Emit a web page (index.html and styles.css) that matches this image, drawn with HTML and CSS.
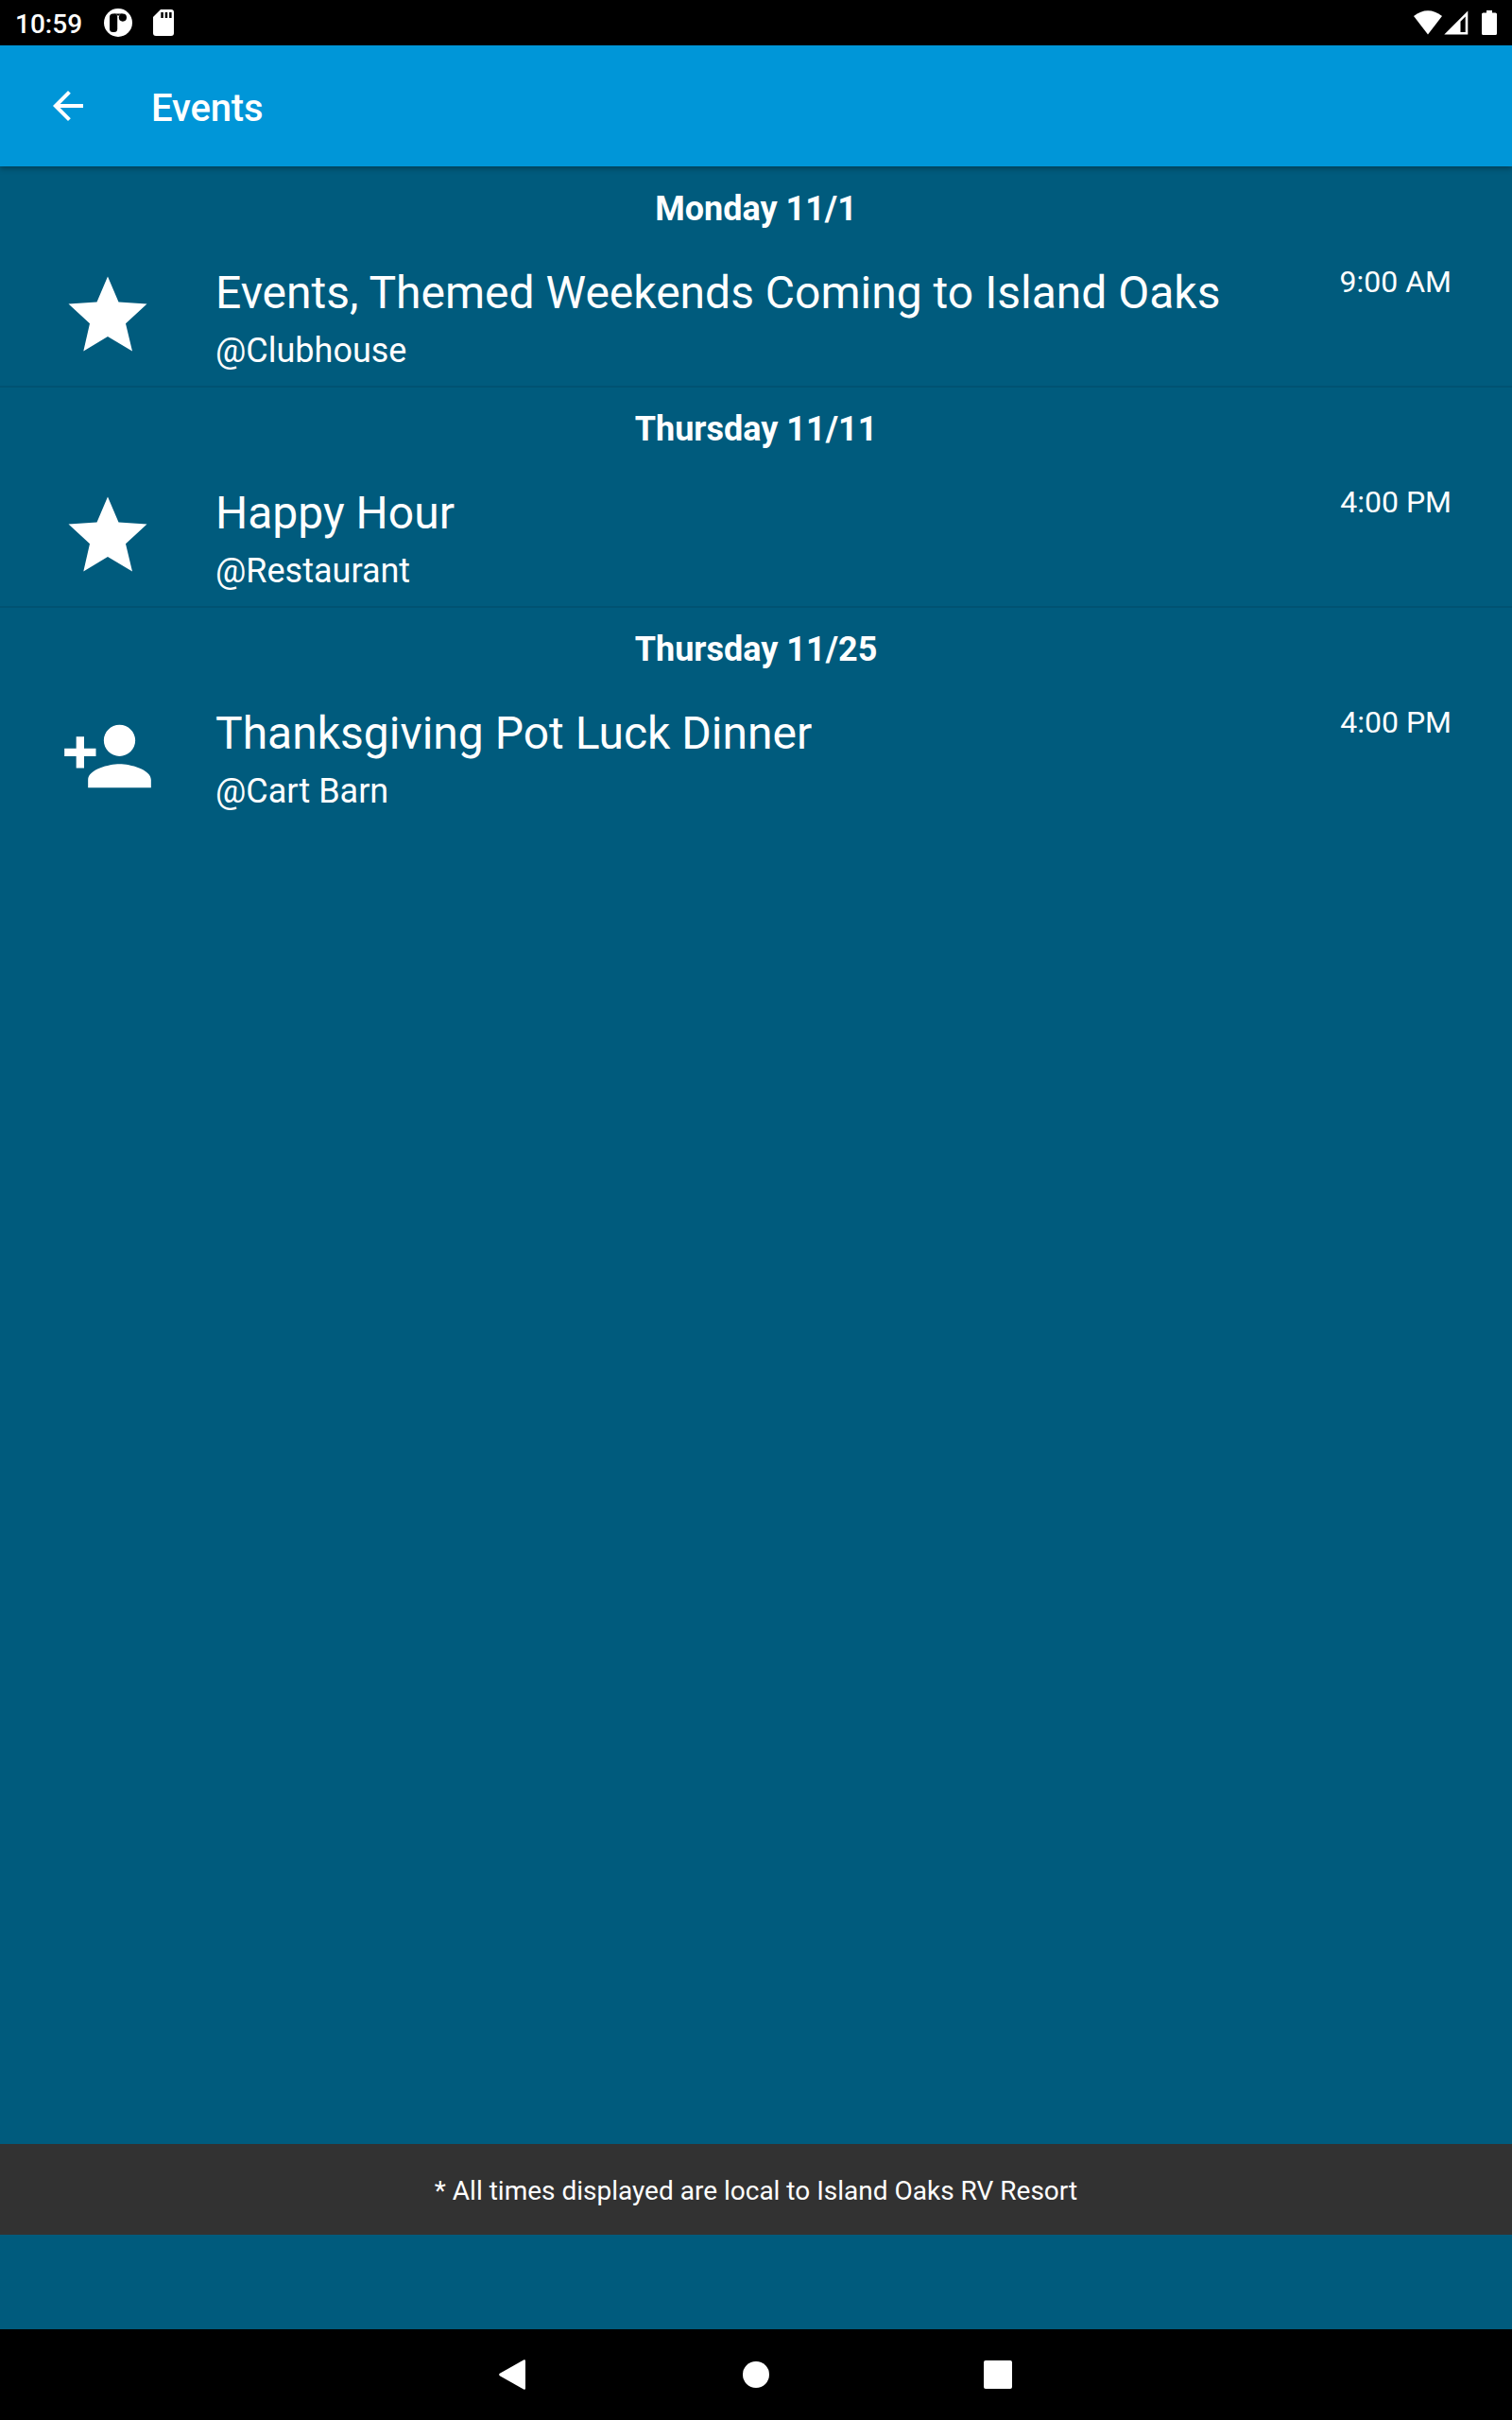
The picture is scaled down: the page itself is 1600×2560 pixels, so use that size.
FILE: index.html
```html
<!DOCTYPE html>
<html lang="en">
<head>
<meta charset="utf-8">
<title>Events</title>
<link rel="stylesheet" href="styles.css">
</head>
<body>
<div class="screen">
  <div class="status">
    <span class="clock">10:59</span>
    <svg class="status-app" width="32" height="32" viewBox="0 0 32 32"><circle cx="16" cy="16" r="15" fill="#fff"/><rect x="7" y="6.500" width="8.200" height="19.500" rx="3.500"/><circle cx="20.900" cy="10.600" r="4.100"/><path d="M11 6.500h9.500v1.200h-3.500l-.800 1.300-1.500-1.300z"/></svg>
    <svg class="status-sd" width="24" height="28" viewBox="0 0 24 28"><path fill="#fff" d="M9 0h11q3 0 3 3v22q0 3-3 3H4q-3 0-3-3V8z"/><path d="M9.300 3h2.500v6H9.300zM13.700 3h2.500v6h-2.500zM18.100 3h2.500v6h-2.500z"/></svg>
    <svg class="status-wifi" width="30" height="26" viewBox="0 0 30 26"><path fill="#fff" d="M0 6Q15-5.500 30 6L15 25.500z"/></svg>
    <svg class="status-cell" width="26" height="26" viewBox="0 0 26 26"><path fill="#fff" fill-rule="evenodd" d="M25.300.500V25.500H.300zM22.700 6.500 17.500 11.700V23h5.200z"/></svg>
    <svg class="status-battery" width="16" height="26" viewBox="0 0 16 26"><path fill="#fff" d="M5 0h6v2.500h3.500q1.500 0 1.500 1.500v20.500q0 1.500-1.500 1.500h-13Q0 26 0 24.500V4q0-1.500 1.500-1.500H5z"/></svg>
  </div>
  <header class="appbar">
    <svg class="back" width="48" height="48" viewBox="0 0 24 24"><path fill="#fff" d="M20 11H7.830l5.590-5.590L12 4l-8 8 8 8 1.410-1.410L7.830 13H20z"/></svg>
    <h1 class="title">Events</h1>
  </header>
  <main class="list">
    <section class="day">
      <h2 class="date">Monday 11/1</h2>
      <div class="event">
        <svg class="icon" width="100" height="100" viewBox="0 0 100 100"><path fill="#fff" d="M50 8.500 61.500 35.500 91.500 37.500 69 58.200 76 87.500 50 72 24.300 87.500 31 58.200 8.500 37.500 38.500 35.500z"/></svg>
        <div class="info"><div class="name">Events, Themed Weekends Coming to Island Oaks</div><div class="place">@Clubhouse</div></div>
        <div class="time">9:00 AM</div>
      </div>
    </section>
    <section class="day">
      <h2 class="date">Thursday 11/11</h2>
      <div class="event">
        <svg class="icon" width="100" height="100" viewBox="0 0 100 100"><path fill="#fff" d="M50 8.500 61.500 35.500 91.500 37.500 69 58.200 76 87.500 50 72 24.300 87.500 31 58.200 8.500 37.500 38.500 35.500z"/></svg>
        <div class="info"><div class="name">Happy Hour</div><div class="place">@Restaurant</div></div>
        <div class="time">4:00 PM</div>
      </div>
    </section>
    <section class="day">
      <h2 class="date">Thursday 11/25</h2>
      <div class="event">
        <svg class="icon" width="100" height="100" viewBox="0 0 24 24"><path fill="#fff" d="M15 12c2.210 0 4-1.790 4-4s-1.790-4-4-4-4 1.790-4 4 1.790 4 4 4zm-9-2V7H4v3H1v2h3v3h2v-3h3v-2H6zm9 4c-2.670 0-8 1.340-8 4v2h16v-2c0-2.660-5.330-4-8-4z"/></svg>
        <div class="info"><div class="name">Thanksgiving Pot Luck Dinner</div><div class="place">@Cart Barn</div></div>
        <div class="time">4:00 PM</div>
      </div>
    </section>
  </main>
  <div class="notice">* All times displayed are local to Island Oaks RV Resort</div>
  <nav class="navbar">
    <svg width="32" height="32" viewBox="0 0 32 32"><path fill="#fff" d="M26.500.300Q28 0 28 1.500v29q0 1.500-1.500 1.200L.800 17.200Q-.500 16 .800 14.800z"/></svg>
    <svg width="32" height="32" viewBox="0 0 32 32"><circle cx="16" cy="16" r="14" fill="#fff"/></svg>
    <svg width="32" height="32" viewBox="0 0 32 32"><rect x="1" y="1" width="30" height="30" rx="2" fill="#fff"/></svg>
  </nav>
</div>
</body>
</html>
```
FILE: styles.css
```css
* { box-sizing: border-box; }
body { margin: 0; font-family: Roboto, sans-serif; color: #fff; }
svg { display: block; flex: none; }
.screen { width: 1600px; height: 2560px; display: flex; flex-direction: column; background: #005b7d; }
.status { height: 48px; flex: none; display: flex; align-items: flex-start; background: #000; padding: 0 16px; }
.clock { width: 93px; font-size: 28px; line-height: 33px; font-weight: 500; padding-top: 9px; }
.status-app { margin-top: 8px; }
.status-sd { margin: 10px 0 0 20px; }
.status-wifi { margin: 11px 0 0 auto; }
.status-cell { margin: 11px 0 0 2px; }
.status-battery { margin: 11px 0 0 14px; }
.appbar { height: 128px; flex: none; display: flex; align-items: center; background: #0096d8; padding: 0 48px; box-shadow: 0 2px 6px rgba(0, 0, 0, .35); }
.title { margin: 5px 0 0 64px; font-size: 40px; line-height: 48px; font-weight: 500; letter-spacing: -.15px; }
.list { flex: 1; padding-top: 1px; }
.day { height: 233px; padding-top: 23px; border-bottom: 2px solid #005272; }
.day:last-child { border-bottom: 0; }
.date { margin: 0; height: 42px; text-align: center; font-size: 36px; line-height: 42px; font-weight: 700; }
.event { display: flex; align-items: flex-start; padding: 0 64px; }
.icon { margin-top: 42px; }
.info { flex: 1; margin: 40px 0 0 64px; }
.name { font-size: 48px; line-height: 56px; }
.place { margin-top: 12px; font-size: 36px; line-height: 42px; }
.time { margin-top: 37px; font-size: 32px; line-height: 38px; }
.notice { height: 96px; flex: none; margin-bottom: 100px; background: #323232; text-align: center; font-size: 28px; line-height: 100px; }
.navbar { height: 96px; flex: none; display: flex; justify-content: center; align-items: center; gap: 224px; background: #000; }
```
